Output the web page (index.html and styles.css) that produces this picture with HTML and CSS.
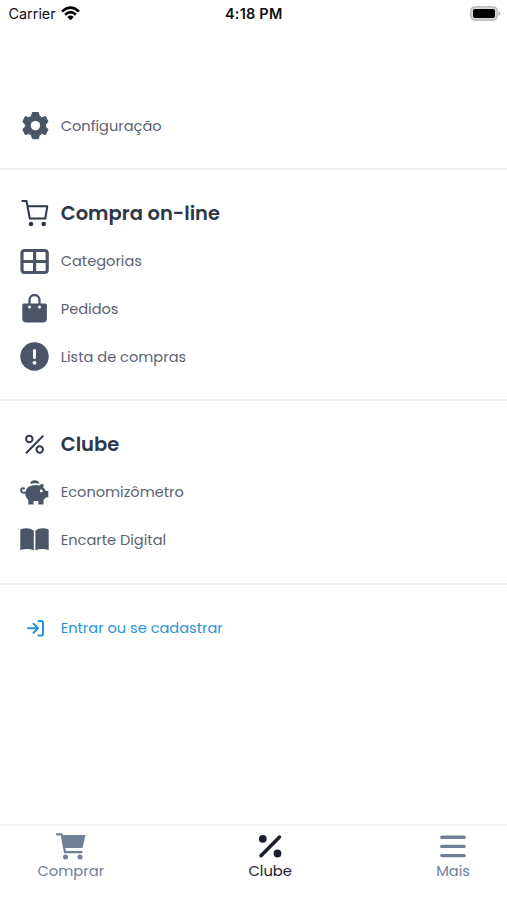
FILE: index.html
```html
<!DOCTYPE html>
<html lang="pt-BR">
<head>
<meta charset="utf-8">
<title>Menu</title>
<link rel="stylesheet" href="styles.css">
</head>
<body>
<div class="app">
  <header class="status">
    <div class="carrier"><span>Carrier</span>
      <svg width="19" height="15" viewBox="0 0 18 14" fill="none" stroke="#000" stroke-width="2.5"><path d="M1 5.1Q9-2.3 17 5.1M3.9 8.1Q9 3.5 14.1 8.1"/><path d="M5.9 10.2Q9 7.4 12.1 10.2L9 13.4Z" fill="#000" stroke="none"/></svg>
    </div>
    <time class="clock">4:18 PM</time>
    <svg class="battery" width="31" height="15" viewBox="0 0 31 15"><rect x=".8" y=".8" width="26.4" height="13.4" rx="4" fill="#d8d8d8" stroke="#b4b4b4" stroke-width="1.2"/><rect x="3" y="3" width="22" height="9" rx="2" fill="#000"/><path d="M28.5 5Q32 7.5 28.5 10Z" fill="#aaa"/></svg>
  </header>
  <main>
    <section class="group first">
      <a class="row"><span class="icon"><svg width="29" height="29" viewBox="0 0 29 29"><path d="M12.4 1.5H18.4L19.3 5.2L21.9 6.7L25.5 5.500L28 10.800L25.500 13.300V15.900L28 18.400L25.500 23.700L21.900 22.500L19.300 24L18.400 27.700H12.400L11.500 24L8.900 22.500L5.300 23.700L2.800 18.400L5.300 15.900V13.300L2.800 10.800L5.300 5.500L8.900 6.700L11.500 5.200Z" fill="currentColor" stroke="currentColor" stroke-width="1" stroke-linejoin="round"/><circle cx="15.400" cy="14.600" r="4.700" fill="#fff"/></svg></span><span class="label">Configuração</span></a>
    </section>
    <section class="group">
      <h2 class="row head"><span class="icon"><svg width="29" height="29" viewBox="0 0 29 29" fill="none" stroke="currentColor" stroke-width="2" stroke-linecap="round" stroke-linejoin="round"><path d="M2.300 2H6.500L9.800 19.500H25.300L27.300 7.200H7.500"/><circle cx="11" cy="25" r="1.300" fill="currentColor"/><circle cx="23.700" cy="25" r="1.300" fill="currentColor"/></svg></span><span class="label">Compra on-line</span></h2>
      <a class="row"><span class="icon"><svg width="29" height="29" viewBox="0 0 29 29" fill="none" stroke="currentColor" stroke-width="3.200"><rect x="2" y="3.500" width="25.200" height="22" rx="2.500"/><path d="M2 14.500H27M14.600 3.500V25"/></svg></span><span class="label">Categorias</span></a>
      <a class="row"><span class="icon"><svg width="29" height="29" viewBox="0 0 29 29"><path d="M9.500 10V6a5 5 0 0 1 10 0V10" fill="none" stroke="currentColor" stroke-width="2.300"/><path d="M4 9.500H25.200Q26.900 9.500 26.900 11V24.500a4 4 0 0 1-4 4H6.300a4 4 0 0 1-4-4V11Q2.300 9.500 4 9.500Z" fill="currentColor"/><circle cx="9.500" cy="13" r="1.500" fill="#fff"/><circle cx="19.500" cy="13" r="1.500" fill="#fff"/></svg></span><span class="label">Pedidos</span></a>
      <a class="row"><span class="icon"><svg width="29" height="29" viewBox="0 0 29 29"><circle cx="14.500" cy="14.500" r="14.200" fill="currentColor"/><path d="M14.500 8.500V15.500" stroke="#fff" stroke-width="3" stroke-linecap="round"/><circle cx="14.500" cy="20.800" r="1.900" fill="#fff"/></svg></span><span class="label">Lista de compras</span></a>
    </section>
    <section class="group">
      <h2 class="row head"><span class="icon"><svg width="29" height="29" viewBox="0 0 29 29" fill="none" stroke="currentColor" stroke-width="2"><circle cx="9.300" cy="9" r="3.200"/><circle cx="19.700" cy="19.500" r="3.200"/><path d="M23.300 5.600L6 23.300"/></svg></span><span class="label">Clube</span></h2>
      <a class="row"><span class="icon"><svg width="29" height="29" viewBox="0 0 29 29" fill="currentColor"><path d="M10 5.700a5 5 0 0 1 9.500 0Q14.700 4.600 10 5.700Z"/><path d="M8.500 8.700Q14 6 19 7.500Q21.500 5.600 23.600 6.200L23.300 9.500Q25.300 11.200 26 13H28.300V19.200H26Q24.900 20.800 23.500 21.700V26.500H18.300V23H13.500V26.500H8.300V22Q4.800 18.800 5.300 14.500Q5.800 10.800 8.500 8.700Z"/><path d="M6.200 14.500Q1 15.300 1.200 12Q1.400 9.500 4 10.500" fill="none" stroke="currentColor" stroke-width="2" stroke-linecap="round"/><circle cx="21.300" cy="13" r="1.400" fill="#fff"/></svg></span><span class="label">Economizômetro</span></a>
      <a class="row"><span class="icon"><svg width="29" height="29" viewBox="0 0 29 29" fill="currentColor"><path d="M13.800 5.500Q8.500 2 1.300 4Q.3 4.300.3 5.500V25Q8.500 23 13.800 25.500ZM15.400 5.500Q20.500 2 27.700 4Q28.700 4.300 28.700 5.500V25Q20.500 23 15.400 25.500Z"/></svg></span><span class="label">Encarte Digital</span></a>
    </section>
    <section class="group last">
      <a class="row login"><span class="icon"><svg width="29" height="29" viewBox="0 0 29 29" fill="none" stroke="currentColor" stroke-width="2" stroke-linecap="round" stroke-linejoin="round"><path d="M8 14.200H18M13.500 9.700L18 14.200L13.500 18.700M18.500 7H21.500Q23 7 23 8.500V19.900Q23 21.400 21.500 21.400H18.500"/></svg></span><span class="label">Entrar ou se cadastrar</span></a>
    </section>
  </main>
  <nav class="tabs">
    <a class="tab buy"><svg width="32" height="30" viewBox="0 0 32 30"><path d="M2 3.300H6.600L10 21.200H26.500" fill="none" stroke="currentColor" stroke-width="2.200" stroke-linecap="round" stroke-linejoin="round"/><path d="M6.800 4H30.500L27.500 17H9.300Z" fill="currentColor"/><circle cx="10.500" cy="26" r="2.500" fill="currentColor"/><circle cx="25" cy="26" r="2.500" fill="currentColor"/></svg><span>Comprar</span></a>
    <a class="tab club"><svg width="32" height="30" viewBox="0 0 32 30"><circle cx="8.800" cy="7.800" r="3.900" fill="currentColor"/><circle cx="23.500" cy="22.500" r="3.900" fill="currentColor"/><path d="M25.500 6L7 24.700" stroke="currentColor" stroke-width="3.500" stroke-linecap="round"/></svg><span>Clube</span></a>
    <a class="tab more"><svg width="32" height="30" viewBox="0 0 32 30"><path d="M4.800 6.200H27.200M4.800 15.400H27.200M4.800 24.600H27.200" stroke="currentColor" stroke-width="3.400" stroke-linecap="round"/></svg><span>Mais</span></a>
  </nav>
</div>
</body>
</html>
```
FILE: styles.css
```css
* { box-sizing: border-box; }
body { margin: 0; background: #fff; font-family: Poppins, Inter, sans-serif; }
.app { height: 900px; display: flex; flex-direction: column; overflow: hidden; }
.status { height: 28px; display: grid; grid-template-columns: 1fr auto 1fr; padding: 0 6px 0 8.5px; align-items: center; line-height: 28px; color: #111; font-family: Inter, sans-serif; }
.carrier { display: flex; align-items: center; gap: 5px; font-size: 14.4px; }
.carrier svg { margin-bottom: 2px; }
.clock { font-weight: 600; font-size: 14.5px; letter-spacing: .2px; margin-right: 2px; }
.battery { justify-self: end; margin-bottom: 2px; }
main { flex: 1; }
.group { padding: 19.8px 20px 18.8px; border-bottom: 2px solid #eeeff1; }
.first { padding-top: 73.8px; }
.last { border: 0; }
.row { display: flex; align-items: center; gap: 12px; height: 47.6px; margin: 0; color: #4a5568; }
.icon { width: 29px; height: 29px; flex: none; }
.icon svg { display: block; }
.label { font-size: 14.6px; font-weight: 400; line-height: 24px; white-space: nowrap; color: #5b6270; margin-left: -.3px; }
.head { color: #2d3748; }
.head .label { font-size: 19.5px; font-weight: 600; color: #2d3748; }
.login, .login .label { color: #2694d9; }
.tabs { height: 76px; display: flex; justify-content: space-between; padding: 5px 37px 0 37.5px; border-top: 2px solid #f5f5f6; color: #718096; }
.tab { display: flex; flex-direction: column; align-items: center; font-size: 14.7px; line-height: 21px; }
.tab svg { display: block; }
.club { color: #1a202c; }
```
